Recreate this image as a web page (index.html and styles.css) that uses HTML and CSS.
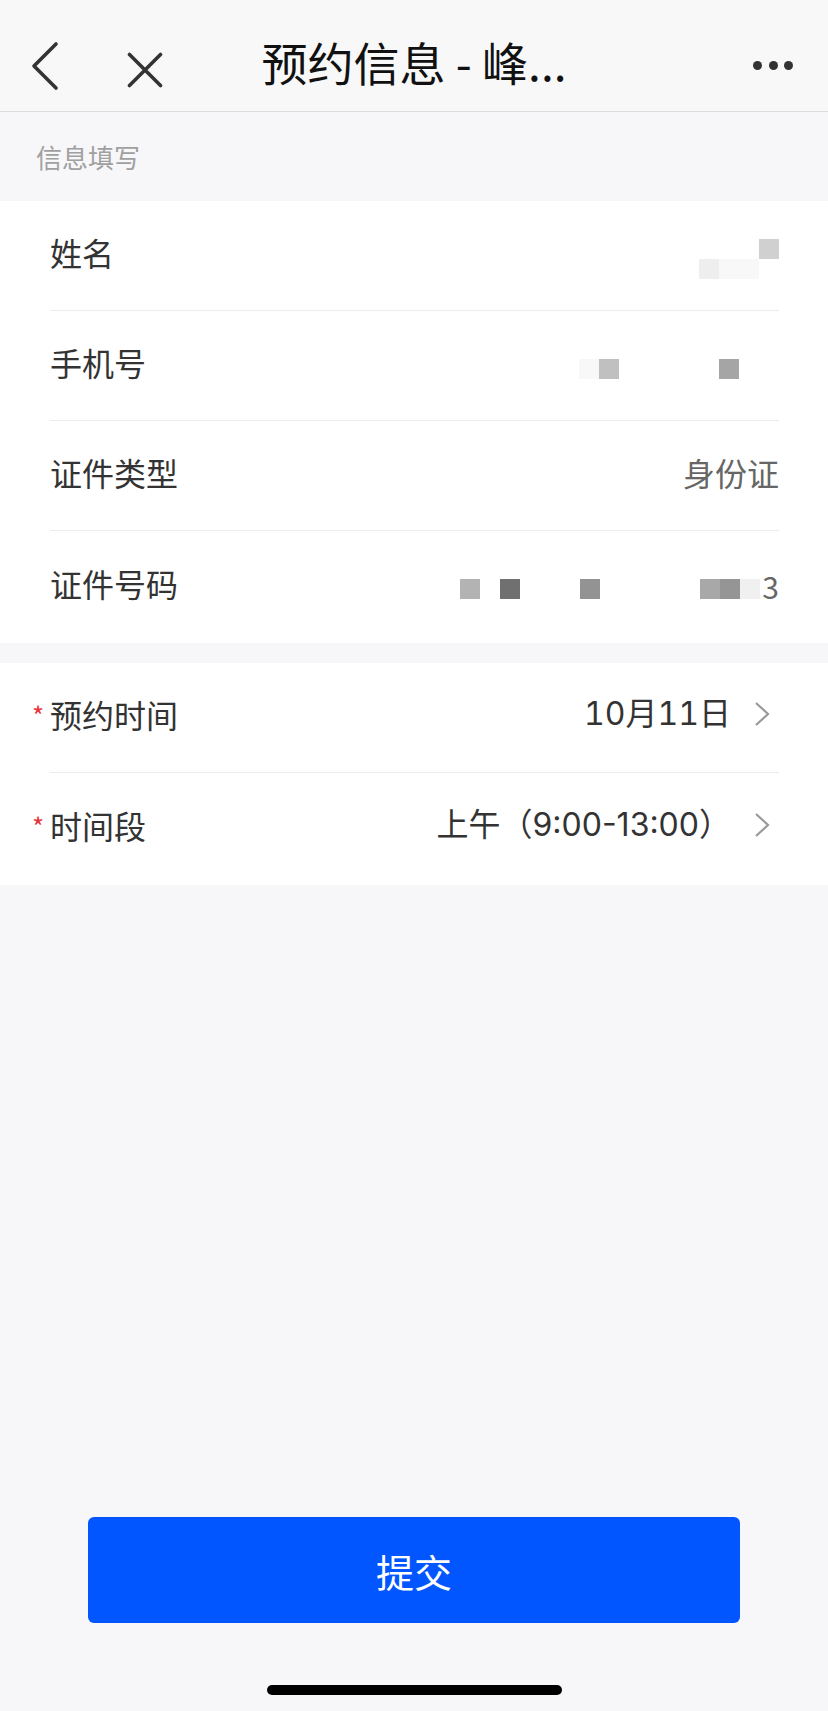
FILE: index.html
```html
<!DOCTYPE html>
<html lang="zh-CN">
<head>
    <meta charset="UTF-8">
    <meta name="viewport" content="width=device-width, initial-scale=1.0">
    <title>预约信息</title>
    <link rel="stylesheet" href="styles.css">
</head>
<body>
    <header class="navbar">
        <div class="nav-left">
            <svg class="icon-back" width="30" height="50" viewBox="0 0 30 50">
                <path d="M26 3 L4 25 L26 47" fill="none" stroke="#333" stroke-width="3.6" stroke-linecap="round" stroke-linejoin="round"/>
            </svg>
            <svg class="icon-close" width="36" height="36" viewBox="0 0 36 36">
                <path d="M2.5 2.5 L33.5 33.5 M33.5 2.5 L2.5 33.5" fill="none" stroke="#333" stroke-width="3.6" stroke-linecap="round"/>
            </svg>
        </div>
        <h1 class="nav-title">预约信息 - 峰...</h1>
        <div class="nav-right">
            <span class="dot"></span><span class="dot"></span><span class="dot"></span>
        </div>
    </header>

    <div class="section-title">信息填写</div>

    <!-- Personal info -->
    <div class="card">
        <div class="row">
            <span class="label">姓名</span>
            <span class="mosaic cols-4">
                <i></i><i></i><i></i><i class="g-d0"></i>
                <i class="g-ee"></i><i class="g-f8"></i><i class="g-f8"></i><i></i>
            </span>
        </div>
        <div class="row">
            <span class="label">手机号</span>
            <span class="mosaic cols-10">
                <i class="g-f8"></i><i class="g-c0"></i><i></i><i></i><i></i>
                <i></i><i></i><i class="g-a5"></i><i></i><i></i>
            </span>
        </div>
        <div class="row">
            <span class="label">证件类型</span>
            <span class="value muted">身份证</span>
        </div>
        <div class="row">
            <span class="label">证件号码</span>
            <span class="id-value">
                <span class="mosaic cols-15">
                    <i class="g-b3"></i><i></i><i class="g-70"></i><i></i><i></i>
                    <i></i><i class="g-93"></i><i></i><i></i><i></i>
                    <i></i><i></i><i class="g-a8"></i><i class="g-95"></i><i class="g-f0"></i>
                </span>
                <span class="id-tail">3</span>
            </span>
        </div>
    </div>

    <!-- Booking time -->
    <div class="card">
        <div class="row">
            <span class="label"><span class="req">*</span>预约时间</span>
            <span class="picker">
                <span class="value latin tabular">10月11日</span>
                <svg class="arrow" width="18" height="28" viewBox="0 0 18 28">
                    <path d="M3 3 L15 14 L3 25" fill="none" stroke="#9a9a9a" stroke-width="2.2"/>
                </svg>
            </span>
        </div>
        <div class="row">
            <span class="label"><span class="req">*</span>时间段</span>
            <span class="picker">
                <span class="value latin">上午（9:00-13:00）</span>
                <svg class="arrow" width="18" height="28" viewBox="0 0 18 28">
                    <path d="M3 3 L15 14 L3 25" fill="none" stroke="#9a9a9a" stroke-width="2.2"/>
                </svg>
            </span>
        </div>
    </div>

    <div class="spacer"></div>

    <footer class="footer">
        <button class="submit">提交</button>
        <div class="home-bar"></div>
    </footer>
</body>
</html>
```

FILE: styles.css
```css
* {
    box-sizing: border-box;
}
html, body {
    height: 100%;
}
body {
    margin: 0;
    padding: 0;
    display: flex;
    flex-direction: column;
    min-height: 100vh;
    background-color: #f7f7fa;
    font-family: "Noto Sans CJK SC", "Noto Sans", sans-serif;
    color: #333;
}

/* top bar */
.navbar {
    height: 112px;
    padding-top: 20px;
    background-color: #f8f8f8;
    border-bottom: 1px solid #dcdcdf;
    display: grid;
    grid-template-columns: 1fr auto 1fr;
    align-items: center;
}
.nav-left {
    display: flex;
    align-items: center;
    padding-left: 30px;
}
.icon-close {
    margin-left: 67px;
    margin-top: 8px;
}
.nav-title {
    margin: 0 0 10px;
    font-size: 46px;
    font-weight: 400;
    line-height: 1;
    color: #111;
    white-space: nowrap;
}
.nav-right {
    display: flex;
    justify-content: flex-end;
    gap: 6.5px;
    padding-right: 35px;
}
.dot {
    width: 9px;
    height: 9px;
    border-radius: 50%;
    background: #333;
}

.section-title {
    height: 89px;
    line-height: 89px;
    padding-left: 36px;
    font-size: 26px;
    color: #a0a0a0;
}

/* form cards */
.card {
    background: #fff;
    padding-bottom: 2px;
    margin-bottom: 20px;
}
.row {
    height: 110px;
    margin: 0 49px 0 50px;
    padding-bottom: 7px;
    display: flex;
    align-items: center;
    justify-content: space-between;
    border-bottom: 1px solid #ececec;
}
.row:last-child {
    border-bottom: none;
}
.label {
    position: relative;
    font-size: 32px;
    line-height: 1;
    color: #333;
}
.req {
    position: absolute;
    left: -18px;
    top: 4px;
    font-size: 26px;
    line-height: 1;
    color: #e8343a;
}
.value {
    font-size: 32px;
    line-height: 1;
    color: #333;
}
.value.latin {
    font-family: "Inter", "Noto Sans CJK SC", sans-serif;
}
.value.tabular {
    font-variant-numeric: tabular-nums;
}
.value.muted {
    color: #666;
}
.picker {
    display: flex;
    align-items: center;
    margin-right: 8px;
}
.arrow {
    margin-left: 22px;
}

/* masked values */
.mosaic {
    display: grid;
    grid-auto-rows: 20px;
    margin-top: 13px;
}
.mosaic.cols-4 { grid-template-columns: repeat(4, 20px); }
.mosaic.cols-10 { grid-template-columns: repeat(10, 20px); }
.mosaic.cols-15 { grid-template-columns: repeat(15, 20px); }
.mosaic i { display: block; }
.g-d0 { background: #d0d0d0; }
.g-ee { background: #eeeeee; }
.g-f8 { background: #f8f8f8; }
.g-f0 { background: #f0f0f0; }
.g-c0 { background: #c0c0c0; }
.g-a5 { background: #a5a5a5; }
.g-b3 { background: #b3b3b3; }
.g-70 { background: #707070; }
.g-93 { background: #939393; }
.g-a8 { background: #a8a8a8; }
.g-95 { background: #959595; }
.id-value {
    display: flex;
    align-items: center;
}
.id-tail {
    width: 19px;
    margin-top: 7px;
    font-size: 30px;
    line-height: 1;
    color: #666;
    text-align: right;
}

.spacer {
    flex: 1;
}
.footer {
    display: flex;
    flex-direction: column;
    align-items: center;
}
.submit {
    width: 652px;
    height: 106px;
    border: none;
    border-radius: 6px;
    background-color: #0256ff;
    color: #fff;
    font-family: inherit;
    font-size: 38px;
}
.home-bar {
    width: 295px;
    height: 10px;
    margin: 62px 0 16px;
    border-radius: 5px;
    background: #000;
}
```
